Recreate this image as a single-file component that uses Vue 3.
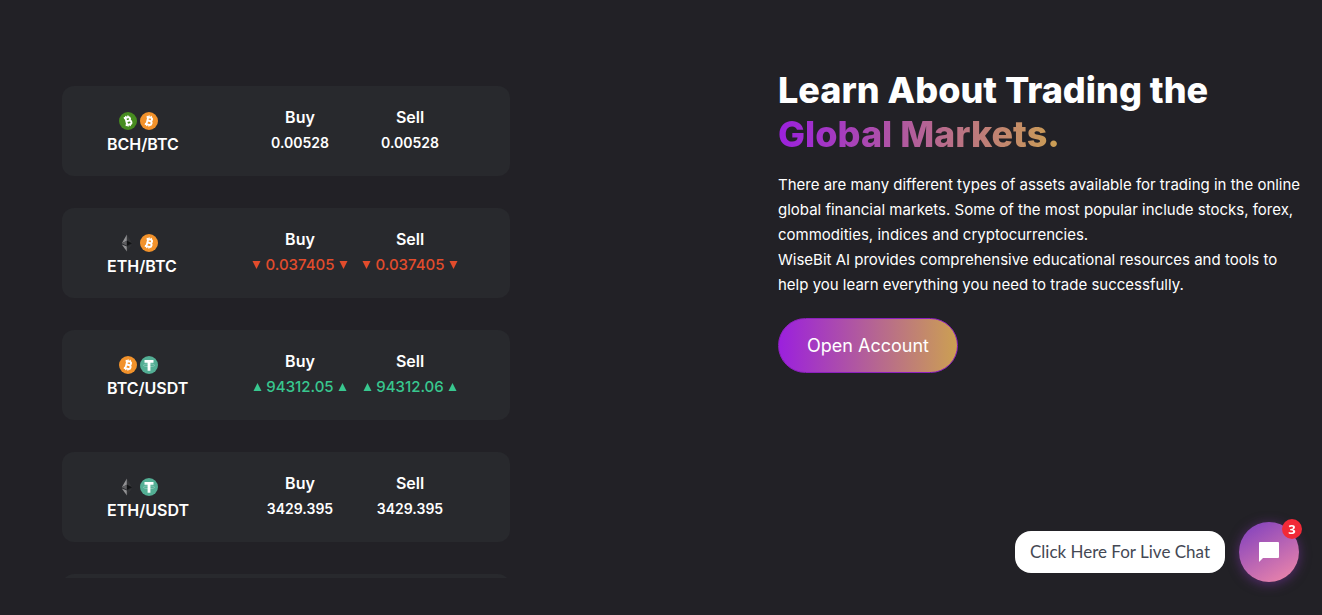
<script setup>
const pairs = [
  { name: 'BCH/BTC', coins: ['bch', 'btc'], buy: '0.00528', sell: '0.00528', trend: 'flat' },
  { name: 'ETH/BTC', coins: ['eth', 'btc'], buy: '0.037405', sell: '0.037405', trend: 'down' },
  { name: 'BTC/USDT', coins: ['btc', 'usdt'], buy: '94312.05', sell: '94312.06', trend: 'up' },
  { name: 'ETH/USDT', coins: ['eth', 'usdt'], buy: '3429.395', sell: '3429.395', trend: 'flat' },
]
const sides = [
  { key: 'buy', label: 'Buy' },
  { key: 'sell', label: 'Sell' },
]
</script>

<template>
  <main class="page">
    <section class="ticker" aria-label="Market prices">
      <article v-for="pair in pairs" :key="pair.name" class="card">
        <div class="pair">
          <div class="coins">
            <svg v-for="coin in pair.coins" :key="coin" class="coin" viewBox="0 0 32 32" aria-hidden="true">
              <template v-if="coin === 'eth'">
                <path d="M14 1v11L5 16.500z" fill="#929294" />
                <path d="M14 12v9L5 16.500z" fill="#5d5d60" />
                <path d="M14 22v9L5 18.500z" fill="#929294" />
                <path d="M14 1v11l9 4.500z" fill="#333437" />
                <path d="M14 12v9l9-4.500z" fill="#111214" />
                <path d="M14 22v9l9-12.500z" fill="#303134" />
              </template>
              <template v-else-if="coin === 'usdt'">
                <circle cx="16" cy="16" r="16" fill="#53ae94" />
                <ellipse cx="16" cy="16.500" rx="10" ry="2.500" fill="none" stroke="#a9d7c9" stroke-width="1" />
                <path d="M8 7h16v5h-5.500v14h-5V12H8z" fill="#fff" />
              </template>
              <template v-else>
                <circle cx="16" cy="16" r="16" :fill="coin === 'btc' ? '#f2922b' : '#478c20'" />
                <g :transform="coin === 'btc' ? 'rotate(14 16 16)' : 'rotate(-14 16 16)'" fill="none" stroke="#fff">
                  <path d="M10 9.500h7.500a3 3 0 0 1 0 6.200H13h5a3.300 3.300 0 0 1 0 6.800h-8M13 9.500v13" stroke-width="3.400" />
                  <path d="M14 6v4M18 6v4M14 22v4M18 22v4" stroke-width="2" />
                </g>
              </template>
            </svg>
          </div>
          <span class="name">{{ pair.name }}</span>
        </div>
        <dl v-for="side in sides" :key="side.key" class="quote">
          <dt>{{ side.label }}</dt>
          <dd :class="pair.trend">
            <svg v-if="pair.trend !== 'flat'" class="arrow" viewBox="0 0 8 8" aria-hidden="true"><path d="M4 0l4 8H0z" /></svg>
            {{ pair[side.key] }}
            <svg v-if="pair.trend !== 'flat'" class="arrow" viewBox="0 0 8 8" aria-hidden="true"><path d="M4 0l4 8H0z" /></svg>
          </dd>
        </dl>
      </article>
      <article class="card" aria-hidden="true"></article>
    </section>

    <section class="intro">
      <h1>Learn About Trading the <span class="accent">Global Markets.</span></h1>
      <p>
        There are many different types of assets available for trading in the online global financial markets. Some of the most popular include stocks, forex, commodities, indices and cryptocurrencies.<br />
        WiseBit AI provides comprehensive educational resources and tools to help you learn everything you need to trade successfully.
      </p>
      <a class="cta" href="#">Open Account</a>
    </section>

    <aside class="chat">
      <span id="chat-label" class="bubble">Click Here For Live Chat</span>
      <button class="launcher" type="button" aria-labelledby="chat-label">
        <svg viewBox="0 0 20 20" aria-hidden="true"><path d="M1 0h18a1 1 0 0 1 1 1v14a1 1 0 0 1-1 1H4l-4 4V1a1 1 0 0 1 1-1z" /></svg>
        <span class="badge">3</span>
      </button>
    </aside>
  </main>
</template>

<style>
body {
  margin: 0;
  background: #222126;
}
</style>

<style scoped>
.page {
  box-sizing: border-box;
  min-height: 100vh;
  padding: 68px 12px 37px 62px;
  display: grid;
  grid-template-columns: 716fr 532fr;
  align-items: start;
  color: #fff;
  font-family: Inter, "Liberation Sans", sans-serif;
}
.ticker {
  max-width: 448px;
  max-height: calc(100vh - 123px);
  margin-top: 18px;
  display: flex;
  flex-direction: column;
  gap: 32px;
  overflow: hidden;
}
.card {
  box-sizing: border-box;
  flex-shrink: 0;
  min-height: 90px;
  padding: 18px 45px;
  display: grid;
  grid-template-columns: 1fr 110px 110px;
  border-radius: 12px;
  background: #28292d;
  font-size: 16px;
  line-height: 26px;
  font-weight: 500;
}
.pair {
  padding-top: 8px;
}
.coins {
  display: flex;
  gap: 3px;
  padding-left: 12px;
}
.coin {
  width: 18px;
  height: 18px;
}
.name {
  display: block;
  line-height: 28px;
}
.name,
.quote dt {
  font-weight: 600;
}
.quote {
  margin: 0;
  text-align: center;
}
.quote dd {
  margin: 0;
  display: flex;
  align-items: center;
  justify-content: center;
  gap: 4px;
  font-size: 15px;
}
.arrow {
  width: 9px;
  height: 8px;
  fill: currentColor;
}
.quote .flat {
  font-size: 14px;
  font-weight: 600;
}
.up {
  color: #38c78f;
}
.down {
  color: #e24c2c;
}
.down .arrow {
  transform: rotate(180deg);
}
h1 {
  margin: 0;
  font-size: 36px;
  line-height: 44px;
  font-weight: 800;
}
.accent {
  display: table;
  background: linear-gradient(90deg, #9b20dd, #cca052);
  background-clip: text;
  -webkit-background-clip: text;
  color: transparent;
}
.intro p {
  margin: 16px 0 21px;
  font-size: 15px;
  line-height: 25px;
}
.cta {
  display: inline-block;
  padding: 14px 28px;
  border: 1px solid #8c20bd;
  border-radius: 28px;
  background: linear-gradient(90deg, #9b20dd, #cca052);
  color: #fff;
  font-size: 18px;
  line-height: 25px;
  text-decoration: none;
}
.chat {
  position: fixed;
  right: 23px;
  bottom: 33px;
  display: flex;
  align-items: center;
  gap: 14px;
}
.bubble {
  padding: 9px 15px;
  border-radius: 16px;
  background: #fff;
  color: #444854;
  font-family: Lato, "Open Sans", sans-serif;
  font-size: 17px;
  line-height: 24px;
}
.launcher {
  position: relative;
  width: 60px;
  height: 60px;
  padding: 0;
  border: 0;
  border-radius: 50%;
  background: linear-gradient(150deg, #8845bd 10%, #ed86aa 95%);
  box-shadow: 0 2px 12px #8b35bb80;
}
.launcher svg {
  display: block;
  width: 20px;
  height: 20px;
  margin: auto;
  fill: #fff;
}
.badge {
  position: absolute;
  top: -3px;
  right: -3px;
  width: 20px;
  height: 20px;
  border-radius: 50%;
  background: #f12937;
  color: #fff;
  font: 700 13px/20px "Open Sans", sans-serif;
}
</style>
